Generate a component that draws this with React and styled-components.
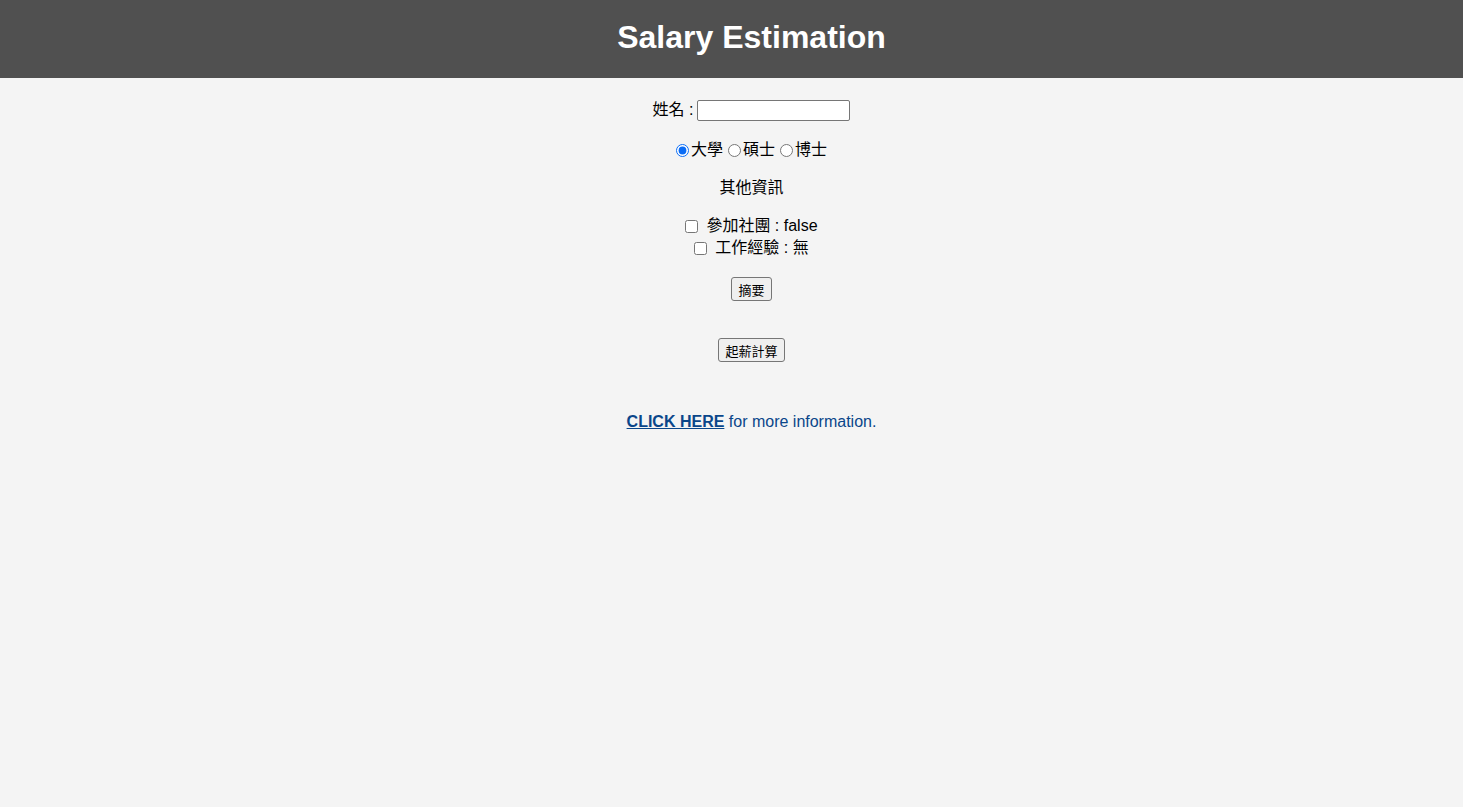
import React, { useState } from "react";
import styled, { createGlobalStyle } from "styled-components";

const GlobalStyle = createGlobalStyle`
  html, body {
    margin: 0;
    padding: 0;
    background: #f4f4f4;
    font-family: "Liberation Sans", "Noto Sans CJK TC", sans-serif;
  }
`;

const Page = styled.div`
  min-height: 807px;
  background: #f4f4f4;
`;

const Header = styled.header`
  height: 78px;
  box-sizing: border-box;
  padding-left: 40px;
  background: #505050;
  display: flex;
  align-items: center;
  justify-content: center;
`;

const Title = styled.h1`
  margin: 0;
  color: #ffffff;
  font-size: 32px;
  font-weight: bold;
  line-height: 1;
  transform: translateY(-2px);
`;

const Content = styled.main`
  display: flex;
  flex-direction: column;
  align-items: center;
  padding: 21px 0 0 40px;
  color: #000;
  font-size: 16px;
`;

const Row = styled.div`
  display: flex;
  align-items: center;
  justify-content: center;
  height: 22px;
  line-height: 22px;
  margin-top: ${(p) => p.$gap || 0}px;
`;

const TextInput = styled.input`
  width: 153px;
  height: 21px;
  box-sizing: border-box;
  margin-left: 4px;
  border: 1px solid #767676;
  border-radius: 2px;
  background: #fff;
  padding: 1px 2px;
  font-size: 13px;
`;

const Radio = styled.input.attrs({ type: "radio" })`
  width: 13px;
  height: 13px;
  margin: 0 2px 0 ${(p) => (p.$first ? 0 : 5)}px;
  accent-color: #0a6cf5;
`;

const Check = styled.input.attrs({ type: "checkbox" })`
  width: 13px;
  height: 13px;
  margin: 0 8px 0 0;
`;

const Button = styled.button`
  margin-top: ${(p) => p.$gap}px;
  height: 24px;
  padding: 1px 6px;
  font-size: 13px;
  font-family: "Liberation Sans", "Noto Sans CJK TC", sans-serif;
  border: 1px solid #767676;
  border-radius: 3px;
  background: #efefef;
  color: #000;
`;

const Info = styled.p`
  margin: 49px 0 0;
  line-height: 22px;
  color: #0a468a;
  font-size: 16px;
`;

const InfoLink = styled.a`
  color: #0a468a;
  font-weight: bold;
  text-decoration: underline;
`;

export default function App() {
  const [degree, setDegree] = useState("bachelor");
  const [club, setClub] = useState(false);
  const [work, setWork] = useState(false);

  return (
    <Page>
      <GlobalStyle />
      <Header>
        <Title>Salary Estimation</Title>
      </Header>
      <Content>
        <Row>
          姓名 :<TextInput type="text" />
        </Row>
        <Row $gap={18}>
          <Radio $first name="degree" checked={degree === "bachelor"} onChange={() => setDegree("bachelor")} />大學
          <Radio name="degree" checked={degree === "master"} onChange={() => setDegree("master")} />碩士
          <Radio name="degree" checked={degree === "phd"} onChange={() => setDegree("phd")} />博士
        </Row>
        <Row $gap={16}>其他資訊</Row>
        <Row $gap={16}>
          <Check checked={club} onChange={() => setClub(!club)} />參加社團 : {String(club)}
        </Row>
        <Row>
          <Check checked={work} onChange={() => setWork(!work)} />工作經驗 : {work ? "有" : "無"}
        </Row>
        <Button $gap={18}>摘要</Button>
        <Button $gap={37}>起薪計算</Button>
        <Info>
          <InfoLink href="#">CLICK HERE</InfoLink> for more information.
        </Info>
      </Content>
    </Page>
  );
}
